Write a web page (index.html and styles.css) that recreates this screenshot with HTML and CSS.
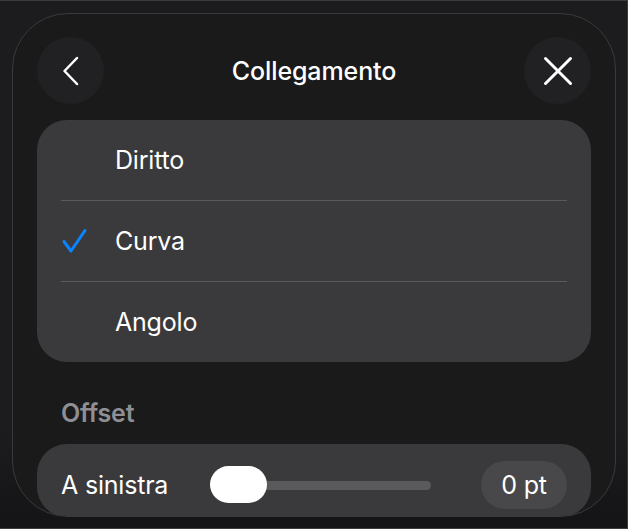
FILE: index.html
```html
<!DOCTYPE html>
<html lang="it">
<head>
<meta charset="utf-8">
<title>Collegamento</title>
<link rel="stylesheet" href="styles.css">
</head>
<body>
<div class="frame">
  <div class="panel">
    <header class="header">
      <button class="circle-btn" aria-label="Indietro">
        <svg width="26" height="30" viewBox="0 0 26 30"><path d="M19 2 L6.5 15 L19 28" fill="none" stroke="#fff" stroke-width="2.5" stroke-linecap="round" stroke-linejoin="round"/></svg>
      </button>
      <h1 class="title">Collegamento</h1>
      <button class="circle-btn" aria-label="Chiudi">
        <svg width="30" height="30" viewBox="0 0 30 30"><path d="M2.5 2.5 L27.5 27.5 M27.5 2.5 L2.5 27.5" fill="none" stroke="#fff" stroke-width="3" stroke-linecap="round"/></svg>
      </button>
    </header>

    <ul class="options">
      <li class="option"><span class="check"></span><span class="option-label">Diritto</span></li>
      <li class="option"><span class="check"><svg width="28" height="26" viewBox="0 0 28 26"><path d="M3 13.5 L10 23 L24 2.5" fill="none" stroke="#0a84ff" stroke-width="3" stroke-linecap="round" stroke-linejoin="round"/></svg></span><span class="option-label">Curva</span></li>
      <li class="option"><span class="check"></span><span class="option-label">Angolo</span></li>
    </ul>

    <div class="section-label">Offset</div>

    <div class="slider-card">
      <div class="slider-row">
        <span class="row-label">A sinistra</span>
        <div class="slider">
          <div class="track"></div>
          <div class="thumb"></div>
        </div>
        <span class="value-pill">0 pt</span>
      </div>
    </div>
  </div>
</div>
</body>
</html>
```

FILE: styles.css
```css
* { box-sizing: border-box; }

html, body {
  margin: 0;
  padding: 0;
  background: #1b1b1d;
}

body {
  font-family: Inter, "Noto Sans", sans-serif;
  color: #fff;
}

.frame {
  width: 628px;
  height: 529px;
  border-top: 1px solid #3c3c3e;
  border-right: 1px solid #3c3c3e;
  border-bottom: 1px solid #3c3c3e;
  padding-top: 12px;
  background: linear-gradient(#1c1c1e 0%, #1c1c1e 82%, #141416 100%);
  overflow: hidden;
}

.panel {
  margin-left: 12px;
  width: 604px;
  height: 504px;
  border: 1px solid #3a3a3c;
  border-radius: 56px;
  background: #1a1a1b;
  overflow: hidden;
  padding: 23px 24px 0;
}

.header {
  display: flex;
  align-items: center;
  justify-content: space-between;
  height: 67px;
}

.circle-btn {
  width: 67px;
  height: 67px;
  border: 0;
  padding: 0;
  border-radius: 50%;
  background: #212123;
  display: flex;
  align-items: center;
  justify-content: center;
}

.title {
  margin: 0;
  font-size: 25px;
  font-weight: 500;
  letter-spacing: -0.1px;
  line-height: 30px;
}

.options {
  list-style: none;
  margin: 16px 0 0;
  padding: 0;
  background: #3a3a3c;
  border-radius: 30px;
}

.option {
  margin: 0 24px;
  height: 80px;
  display: flex;
  align-items: center;
}

.option + .option {
  border-top: 1px solid #5a5a5e;
  height: 81px;
}

.check {
  width: 54px;
  display: flex;
  align-items: center;
}

.option-label,
.row-label {
  font-size: 25px;
  font-weight: 400;
  letter-spacing: -0.2px;
  line-height: 30px;
}

.section-label {
  height: 82px;
  padding: 36px 0 0 24px;
  font-size: 25px;
  font-weight: 600;
  letter-spacing: -0.2px;
  line-height: 30px;
  color: #8e8e93;
}

.slider-card {
  height: 73px;
  background: #3a3a3c;
  border-radius: 30px;
  overflow: hidden;
}

.slider-row {
  height: 82px;
  display: flex;
  align-items: center;
  padding: 0 24px;
}

.slider {
  position: relative;
  flex: 1;
  height: 38px;
  margin: 0 50px 0 42px;
  display: flex;
  align-items: center;
}

.track {
  width: 100%;
  height: 9px;
  border-radius: 5px;
  background: #5a5a5d;
}

.thumb {
  position: absolute;
  left: 0;
  top: 0;
  width: 57px;
  height: 37px;
  border-radius: 19px;
  background: #fff;
}

.value-pill {
  width: 86px;
  height: 48px;
  border-radius: 24px;
  background: #48484a;
  display: flex;
  align-items: center;
  justify-content: center;
  font-size: 25px;
  letter-spacing: -0.2px;
}
```
